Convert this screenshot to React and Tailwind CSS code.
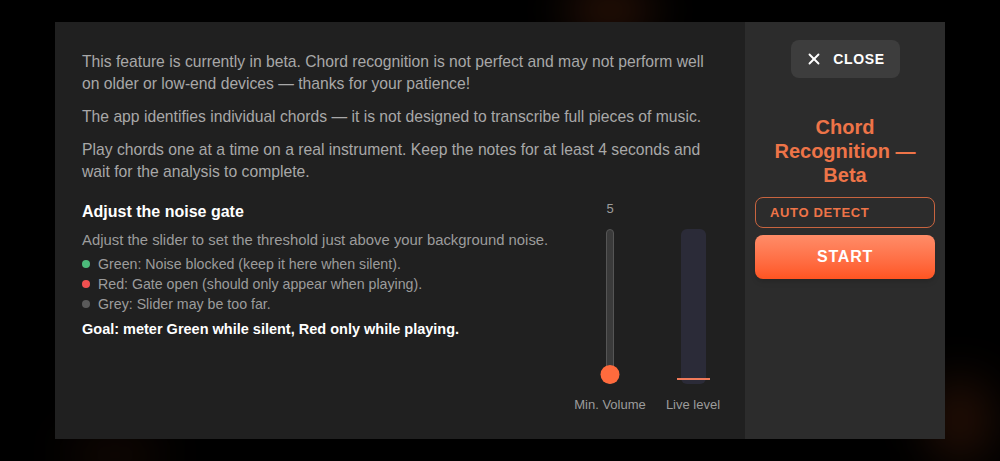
import React from "react";
import { X } from "lucide-react";

const Bullet = ({ color, children }) => (
  <li className="flex items-center gap-2">
    <span className={`w-2 h-2 rounded-full ${color}`}></span>
    <span>{children}</span>
  </li>
);

export default function App() {
  return (
    <div
      className="relative w-[1000px] h-[461px] bg-black overflow-hidden"
      style={{ fontFamily: '"Liberation Sans", Arial, sans-serif' }}
    >
      {/* faint glows behind the modal */}
      <div className="absolute left-[570px] top-[-10px] w-[80px] h-[40px] rounded-full bg-[#ff6a2a]/20 blur-xl"></div>
      <div className="absolute left-[930px] top-[380px] w-[60px] h-[80px] rounded-full bg-[#ff6a2a]/15 blur-xl"></div>
      <div className="absolute left-[70px] top-[440px] w-[90px] h-[30px] rounded-full bg-[#ff6a2a]/10 blur-xl"></div>

      <div className="relative flex h-full px-[55px] py-[22px]">
        <div className="flex w-full h-full">
          {/* Left panel */}
          <div className="w-[690px] bg-[#202020] pl-[27px] pr-[22px] pt-[29px] text-[#a8a8a8]">
            <div className="text-[15.7px] leading-[22px] space-y-[11px] pr-[8px]">
              <p>
                This feature is currently in beta. Chord recognition is not perfect and may not perform well
                on older or low-end devices — thanks for your patience!
              </p>
              <p>The app identifies individual chords — it is not designed to transcribe full pieces of music.</p>
              <p>
                Play chords one at a time on a real instrument. Keep the notes for at least 4 seconds and wait
                for the analysis to complete.
              </p>
            </div>

            <div className="flex mt-[12px]">
              <div className="flex-1 pt-[7px]">
                <h3 className="text-white font-bold text-[16px] leading-[20px]">Adjust the noise gate</h3>
                <p className="text-[14.85px] leading-[20px] mt-[8px] text-[#9c9c9c]">
                  Adjust the slider to set the threshold just above your background noise.
                </p>
                <ul className="text-[14.2px] leading-[20px] mt-[4px] text-[#9c9c9c]">
                  <Bullet color="bg-[#4cba7a]">Green: Noise blocked (keep it here when silent).</Bullet>
                  <Bullet color="bg-[#f05050]">Red: Gate open (should only appear when playing).</Bullet>
                  <Bullet color="bg-[#5a5a5a]">Grey: Slider may be too far.</Bullet>
                </ul>
                <p className="text-white font-bold text-[14.5px] leading-[20px] mt-[5px]">
                  Goal: meter Green while silent, Red only while playing.
                </p>
              </div>

              {/* Meters */}
              <div className="flex gap-[13px] pt-[6px] text-[13px] text-[#9c9c9c]">
                <div className="flex flex-col items-center w-[80px]">
                  <span className="leading-[16px] h-[16px]">5</span>
                  <div className="relative mt-[12px] w-[8px] h-[155px] rounded-full bg-[#3a3a3a] border border-[#555]">
                    <div className="absolute left-1/2 -translate-x-1/2 bottom-[-1px] w-[19px] h-[19px] rounded-full bg-[#ff6b3d]"></div>
                  </div>
                  <span className="mt-[13px] leading-[16px] whitespace-nowrap">Min. Volume</span>
                </div>
                <div className="flex flex-col items-center w-[60px]">
                  <span className="h-[16px]"></span>
                  <div className="relative mt-[12px] w-[25px] h-[155px] rounded-md bg-[#2b2b38]">
                    <div className="absolute left-[-4px] right-[-4px] bottom-[4px] h-[2px] bg-[#f07a5a]"></div>
                  </div>
                  <span className="mt-[13px] leading-[16px] whitespace-nowrap">Live level</span>
                </div>
              </div>
            </div>
          </div>

          {/* Right panel */}
          <div className="w-[200px] bg-[#2c2c2c] flex flex-col items-center pt-[18px] px-[10px]">
            <button className="flex items-center gap-[10px] h-[38px] w-[109px] justify-center rounded-lg bg-[#3d3d3d] text-white font-bold text-[14px] tracking-wider">
              <X size={18} strokeWidth={2.5} />
              CLOSE
            </button>
            <h2 className="mt-[37px] text-[#ee7448] font-bold text-[20px] leading-[24px] text-center px-[10px]">
              Chord Recognition — Beta
            </h2>
            <div className="mt-[10px] w-full h-[31px] flex items-center rounded-lg border border-[#c8643f] px-[14px] text-[#ee7448] font-bold text-[13px] tracking-wider">
              AUTO DETECT
            </div>
            <button className="mt-[7px] w-full h-[44px] rounded-lg bg-gradient-to-b from-[#ff8c68] to-[#ff5420] text-white font-bold text-[16px] tracking-wider shadow-md">
              START
            </button>
          </div>
        </div>
      </div>
    </div>
  );
}
